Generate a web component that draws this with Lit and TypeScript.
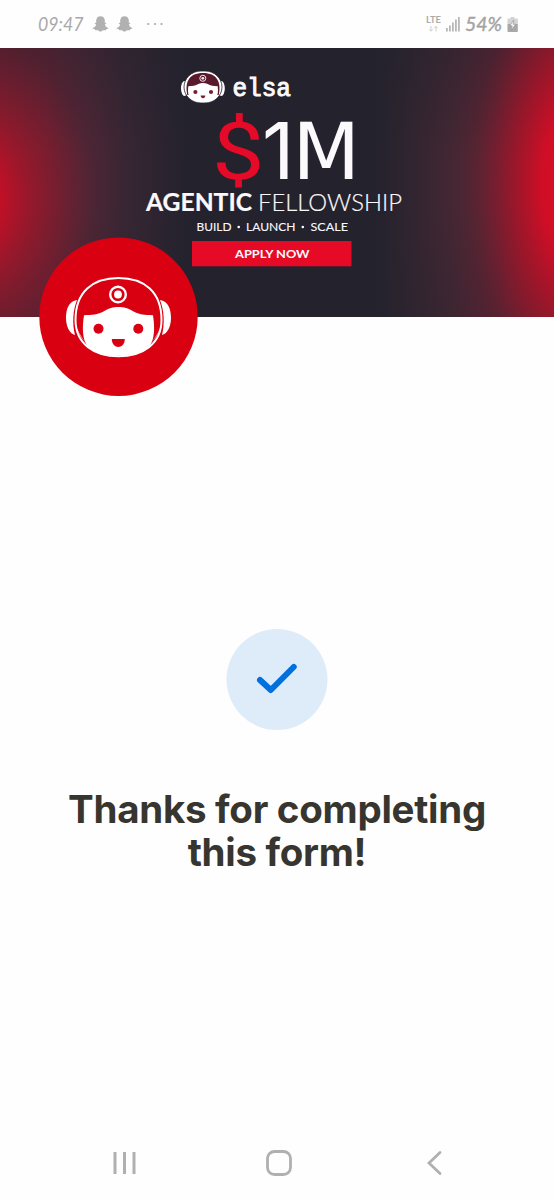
import { LitElement, html, css, svg } from "lit";
import { customElement } from "lit/decorators.js";

const ghost = html`<svg class="ghost" viewBox="0 0 17 16" width="17" height="16">
  <path d="M8.5.3C5.7.3 4.200 2.300 4.200 4.600v2.100c-.5.200-1.300-.1-1.500.4-.2.600 1 .9 1.300 1.300.2 1.300-1.500 2.900-3.400 3.500-.3.600.8 1.100 2.200 1.300l.4 1c.8.1 1.600-.2 2.500.1.900.4 1.600 1.300 2.800 1.300s1.900-.9 2.800-1.300c.9-.3 1.700 0 2.500-.1l.4-1c1.400-.2 2.500-.7 2.200-1.300-1.900-.6-3.600-2.200-3.400-3.500.3-.4 1.500-.7 1.300-1.300-.2-.5-1-.2-1.500-.4V4.600C12.800 2.300 11.300.3 8.500.3z" fill="#b1b1b1"/>
</svg>`;

@customElement("status-bar")
export class StatusBar extends LitElement {
  static styles = css`
    :host {
      display: flex;
      align-items: center;
      justify-content: space-between;
      height: 48px;
      box-sizing: border-box;
      padding: 0 36px 0 38px;
      color: #a6a6a6;
      font-family: Lato, sans-serif;
    }
    .side { display: flex; align-items: center; }
    .ghost { margin-left: 7px; }
    .side svg { display: block; flex: none; overflow: visible; }
    .dots { margin-left: 14px; }
    .signal { margin-left: 5px; }
    .battery { margin-left: 3px; }
  `;
  render() {
    return html`
      <div class="side">
        <svg width="47" height="24" viewBox="0 -2 47 24">
          <text x="0" y="17" font-size="19.500" font-style="italic" textLength="45.500" lengthAdjust="spacingAndGlyphs" fill="#a9a9a9">09:47</text>
        </svg>
        ${ghost}${ghost}
        <svg class="dots" width="16" height="4" viewBox="0 0 16 4" fill="#a9a9a9">
          <circle cx="1.300" cy="2" r="1.100"/><circle cx="8" cy="2" r="1.100"/><circle cx="14.500" cy="2" r="1.100"/>
        </svg>
      </div>
      <div class="side">
        <svg width="15" height="18" viewBox="0 0 15 18">
          <text x="0" y="8.300" font-size="9.500" font-weight="700" textLength="15" lengthAdjust="spacingAndGlyphs" fill="#ababab">LTE</text>
          <path d="M5 11v5M3.300 14.400 5 16.200l1.700-1.800M10 16.500v-5M8.300 13.200 10 11.400l1.700 1.800" stroke="#cfcfcf" fill="none"/>
        </svg>
        <svg class="signal" width="14" height="16" viewBox="0 0 14 16" fill="#b8b8b8">
          <rect x="0" y="12" width="1.800" height="3.500"/><rect x="3" y="9.500" width="1.800" height="6"/><rect x="6" y="6.500" width="1.800" height="9"/><rect x="9" y="3.500" width="1.800" height="12"/><rect x="12" y="1" width="1.800" height="14.500"/>
        </svg>
        <svg width="44" height="24" viewBox="0 -2 44 24">
          <text x="5" y="17" font-size="20" font-weight="400" font-style="italic" textLength="37" lengthAdjust="spacingAndGlyphs" fill="#a3a3a3" stroke="#a3a3a3" stroke-width=".4">54%</text>
        </svg>
        <svg class="battery" width="11" height="17" viewBox="0 0 11 17">
          <path d="M3.500 1h4v1.500H10a.8.800 0 0 1 .8.800v4.700H.500V3.300a.8.800 0 0 1 .8-.8h2.200z" fill="#d3d3d3"/>
          <path d="M.500 8h10.300v7.200a.8.800 0 0 1-.8.800H1.300a.8.800 0 0 1-.8-.8z" fill="#a8a8a8"/>
          <path d="M6.700 4 2.800 9.800h2.400L4.400 14l4.200-5.800H6z" fill="#fff" stroke="#999" stroke-width=".7"/>
        </svg>
      </div>`;
  }
}

const word = (
  text: string, x: number, y: number, width: number, size: number,
  weight: number, fill = "#fbf9fc", family = "Lato", stroke = 0,
) => svg`<text x=${x} y=${y} font-size=${size} font-weight=${weight} fill=${fill}
  stroke=${fill} stroke-width=${stroke}
  font-family="${family}, sans-serif" textLength=${width}
  lengthAdjust="spacingAndGlyphs">${text}</text>`;

@customElement("fellowship-banner")
export class FellowshipBanner extends LitElement {
  static styles = css`
    :host { display: block; height: 269px; }
    .art { display: block; }
  `;
  render() {
    return html`<svg class="art" width="554" height="269" viewBox="0 48 554 269">
      <defs>
        <linearGradient id="base">
          <stop offset="0" stop-color="#7a1c2f"/><stop offset=".08" stop-color="#6b2032"/>
          <stop offset=".15" stop-color="#522535"/><stop offset=".23" stop-color="#372633"/>
          <stop offset=".34" stop-color="#23222d"/>
          <stop offset=".67" stop-color="#23222d"/><stop offset=".74" stop-color="#302530"/>
          <stop offset=".82" stop-color="#452733"/><stop offset=".9" stop-color="#6a2132"/>
          <stop offset="1" stop-color="#a8162a"/>
        </linearGradient>
        <radialGradient id="left" gradientUnits="userSpaceOnUse" cx="0" cy="0" r="1" gradientTransform="translate(-30 200) scale(125 165)">
          <stop offset="0" stop-color="#c90f26"/><stop offset=".25" stop-color="#c01027"/>
          <stop offset=".6" stop-color="#93192b" stop-opacity=".6"/><stop offset="1" stop-color="#702030" stop-opacity="0"/>
        </radialGradient>
        <radialGradient id="right" gradientUnits="userSpaceOnUse" cx="0" cy="0" r="1" gradientTransform="translate(580 185) scale(108 220)">
          <stop offset="0" stop-color="#dc0c25"/><stop offset=".35" stop-color="#d00e26"/>
          <stop offset=".65" stop-color="#a01529" stop-opacity=".65"/><stop offset="1" stop-color="#702030" stop-opacity="0"/>
        </radialGradient>
        <linearGradient id="shade" x2="0" y2="1">
          <stop offset="0" stop-color="#23222d" stop-opacity=".45"/><stop offset=".4" stop-color="#23222d" stop-opacity="0"/>
          <stop offset=".6" stop-color="#23222d" stop-opacity="0"/><stop offset="1" stop-color="#23222d" stop-opacity=".25"/>
        </linearGradient>
      </defs>
      <rect y="48" width="554" height="269" fill="url(#base)"/>
      <rect y="48" width="554" height="269" fill="url(#shade)"/>
      <rect y="48" width="554" height="269" fill="url(#left)"/>
      <rect y="48" width="554" height="269" fill="url(#right)"/>

      <ellipse cx="184.500" cy="88.500" rx="3.500" ry="7.500" fill="#fff"/>
      <ellipse cx="221.300" cy="88.500" rx="3.500" ry="7.500" fill="#fff"/>
      <rect x="184" y="71" width="38" height="32" rx="17" ry="16" fill="#fff" stroke="#23222d" stroke-width=".8"/>
      <path d="M187.300 95C184.500 82 189 73 203 73s18.500 9 15.700 22z" fill="#591a2b"/>
      <path d="M188.300 86.300c4 0 7.500-.4 10-2.200 3-1.600 6.400-1.600 9.400 0 2.500 1.800 6 2.200 10 2.200.6 6 .4 9-2.200 11.200-6 4.500-19 4.500-25 0-2.600-2.200-2.800-5.200-2.200-11.200z" fill="#fff"/>
      <circle cx="202.800" cy="78.300" r="3" fill="none" stroke="#f5e8ed"/><circle cx="202.800" cy="78.300" r="1.400" fill="#f5e8ed"/>
      <circle cx="195.400" cy="92" r="2.100" fill="#7d1c32"/><circle cx="211" cy="92" r="2.100" fill="#7d1c32"/>
      <path d="M200.700 95.600h4.600c0 3.600-4.600 3.600-4.600 0z" fill="#7d1c32"/>

      ${word("elsa", 232.500, 95.500, 58.500, 25, 400, "#fbf9fc", "Liberation Mono", 1)}
      ${word("$", 212, 178.500, 52.500, 79, 400, "#e50a27", "Roboto")}
      ${word("1", 262, 178.500, 32.500, 79, 400, "#fbf9fc", "Inter")}
      ${word("M", 292.500, 178.500, 67.500, 78.500, 400, "#fbf9fc", "DejaVu Sans")}
      ${word("AGENTIC", 146, 211, 106, 23.800, 700, "#fbf9fc", "Lato", .2)}
      ${word("FELLOWSHIP", 258, 211, 144, 23.800, 300, "#fbf9fc", "Lato", .2)}
      ${word("BUILD", 196.500, 230.500, 35, 11.300, 400, "#fbf9fc", "Lato", .1)}
      ${word("LAUNCH", 246, 230.500, 49.500, 11.300, 400, "#fbf9fc", "Lato", .1)}
      ${word("SCALE", 310.500, 230.500, 37.500, 11.300, 400, "#fbf9fc", "Lato", .1)}
      <circle cx="238.700" cy="227" r="1.300" fill="#fff"/><circle cx="302.800" cy="227" r="1.300" fill="#fff"/>
      <rect x="192" y="241" width="159.500" height="25.300" fill="#e60a27"/>
      ${word("APPLY NOW", 235, 257.500, 74.500, 11.800, 700)}
    </svg>`;
  }
}

@customElement("elsa-avatar")
export class ElsaAvatar extends LitElement {
  static styles = css`
    :host { display: block; width: 159px; height: 159px; }
    .face { display: block; }
  `;
  render() {
    return html`<svg class="face" width="159" height="159" viewBox="39 237 159 159">
      <circle cx="118.500" cy="316.700" r="79.200" fill="#d90011"/>
      <path d="M77 300c-8 1-11 9-11 18s4 16 9 17c-3-12-2-25 2-35zM160 300c8 1 11 9 11 18s-4 16-9 17c3-12 2-25-2-35z" fill="#fff"/>
      <path d="M118.500 278c-26 0-43 14-43 42 0 24 19 36.300 43 36.300s43-12.300 43-36.300c0-28-17-42-43-42z" fill="#d90011" stroke="#fff" stroke-width="2"/>
      <path d="M84 315.200c8-.2 14-.7 19.500-3.700 6-3.600 9-4.600 15-4.600s9 1 15 4.600c5.500 3 11.500 3.500 19.500 3.700 2 13 1.500 23-3 30.500-2 2-4 3.500-7 5-14 6.800-35 6.800-49 0-3-1.500-5-3-7-5-4.500-7.500-5-17.500-3-30.500z" fill="#fff"/>
      <path d="M76 326c2.500 9 8 16 16 21.500 5 3.500 10 5.500 16 7.500l-14-6c-8-4-14-13-18-23zM161 326c-2.500 9-8 16-16 21.500-5 3.500-10 5.500-16 7.500l14-6c8-4 14-13 18-23z" fill="#fff"/>
      <circle cx="118" cy="294.500" r="7.800" fill="none" stroke="#fff" stroke-width="2.400"/>
      <circle cx="118" cy="294.500" r="3.900" fill="#fff"/>
      <circle cx="98.500" cy="328.700" r="5" fill="#d90011"/><circle cx="138.300" cy="328.700" r="5" fill="#d90011"/>
      <path d="M111.800 339h13c0 10.500-13 10.500-13 0z" fill="#d90011"/>
    </svg>`;
  }
}

@customElement("app-root")
export class AppRoot extends LitElement {
  static styles = css`
    :host {
      display: flex;
      flex-direction: column;
      height: 1200px;
      background: #fefefe;
      overflow: hidden;
    }
    .avatar { margin: -80px 0 0 39px; position: relative; }
    .done {
      flex: 1;
      display: flex;
      flex-direction: column;
      align-items: center;
      padding-top: 233px;
    }
    .check { display: block; }
    .title {
      margin: 58px 0 0;
      color: #37352f;
      font: 700 38.500px/43px Inter, sans-serif;
      letter-spacing: -0.28px;
      text-align: center;
    }
    .nav {
      display: flex;
      justify-content: space-between;
      align-items: center;
      height: 74px;
      padding: 0 111px 0 112px;
    }
    .home { margin-right: 4px; }
  `;
  render() {
    return html`
      <status-bar></status-bar>
      <fellowship-banner></fellowship-banner>
      <elsa-avatar class="avatar"></elsa-avatar>
      <main class="done">
        <svg class="check" width="102" height="101" viewBox="0 0 102 101">
          <circle cx="51" cy="50.500" r="50.500" fill="#deecf9"/>
          <path d="M34 51 44.800 61 67.700 38" fill="none" stroke="#0070de" stroke-width="6" stroke-linecap="round" stroke-linejoin="round"/>
        </svg>
        <h1 class="title">Thanks for completing<br>this form!</h1>
      </main>
      <nav class="nav">
        <svg width="25" height="26" viewBox="0 0 25 26"><path d="M3 2v22M12.500 2v22M22 2v22" stroke="#b0b0b0" stroke-width="3"/></svg>
        <svg class="home" width="28" height="28" viewBox="0 0 28 28"><rect x="2.500" y="2.500" width="23" height="23" rx="7" fill="none" stroke="#b0b0b0" stroke-width="2.800"/></svg>
        <svg width="18" height="26" viewBox="0 0 18 26"><path d="M15 2.500 4 13l11 10.500" fill="none" stroke="#b0b0b0" stroke-width="2.800" stroke-linecap="round"/></svg>
      </nav>`;
  }
}
